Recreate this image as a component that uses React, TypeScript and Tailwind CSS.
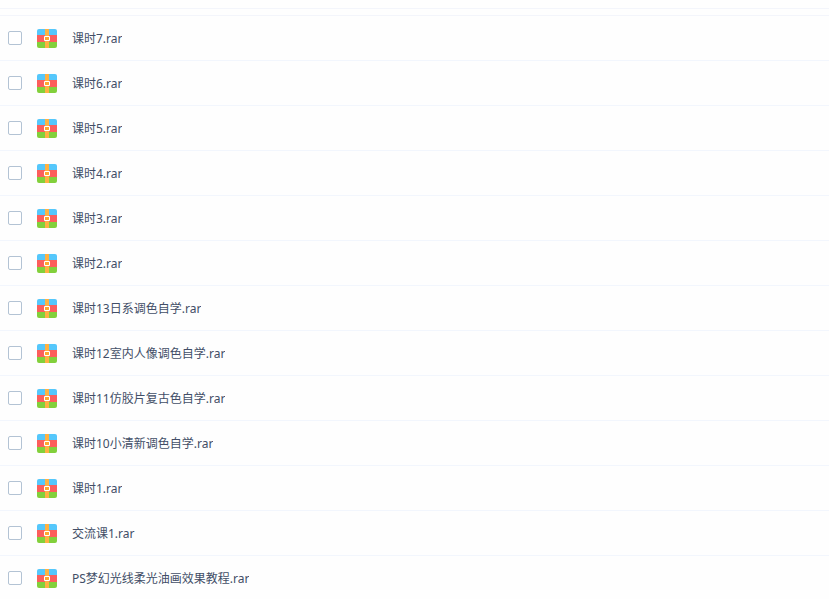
import { useState } from 'react';

const files = [
  '课时7.rar',
  '课时6.rar',
  '课时5.rar',
  '课时4.rar',
  '课时3.rar',
  '课时2.rar',
  '课时13日系调色自学.rar',
  '课时12室内人像调色自学.rar',
  '课时11仿胶片复古色自学.rar',
  '课时10小清新调色自学.rar',
  '课时1.rar',
  '交流课1.rar',
  'PS梦幻光线柔光油画效果教程.rar',
];

// Archive icon: three stacked books held by a strap
function ArchiveIcon() {
  return (
    <svg viewBox="0 0 20 20" className="size-5 shrink-0" aria-hidden="true">
      <path d="M0 7V3a2 2 0 0 1 2-2h16a2 2 0 0 1 2 2v4z" fill="#55c7fb" />
      <path d="M0 7h20v7H0z" fill="#fc5e5c" />
      <path d="M0 14h20v4a2 2 0 0 1-2 2H2a2 2 0 0 1-2-2z" fill="#82d03b" />
      <path d="M8 1h4v19H8z" fill="#ffb141" />
      <path d="M7.5 8.5h5v4h-5z" fill="#ffa62f" stroke="#fff" />
    </svg>
  );
}

interface FileRowProps {
  name: string;
  checked: boolean;
  onToggle: () => void;
}

function FileRow({ name, checked, onToggle }: FileRowProps) {
  return (
    <li className="border-b border-[#f2f6fd]">
      <label className="flex h-11 items-center gap-[15px] px-2 cursor-pointer">
        <input
          type="checkbox"
          checked={checked}
          onChange={onToggle}
          className="size-3.5 shrink-0 appearance-none rounded-xs border border-[#b3c3d4] bg-white checked:border-[#3b8cff] checked:bg-[#3b8cff]"
        />
        <ArchiveIcon />
        <span className="truncate pt-0.5 text-xs text-[#424e67]">{name}</span>
      </label>
    </li>
  );
}

export default function App() {
  const [selected, setSelected] = useState<string[]>([]);

  const toggle = (name: string) => {
    setSelected((prev) =>
      prev.includes(name) ? prev.filter((item) => item !== name) : [...prev, name]
    );
  };

  return (
    <main className="min-h-screen bg-[#fefefe] pt-2 font-['Noto_Sans','Noto_Sans_CJK_SC',sans-serif]">
      <div className="h-2 border-y border-[#f3f5fb]" />
      <ul>
        {files.map((name) => (
          <FileRow
            key={name}
            name={name}
            checked={selected.includes(name)}
            onToggle={() => toggle(name)}
          />
        ))}
      </ul>
    </main>
  );
}
